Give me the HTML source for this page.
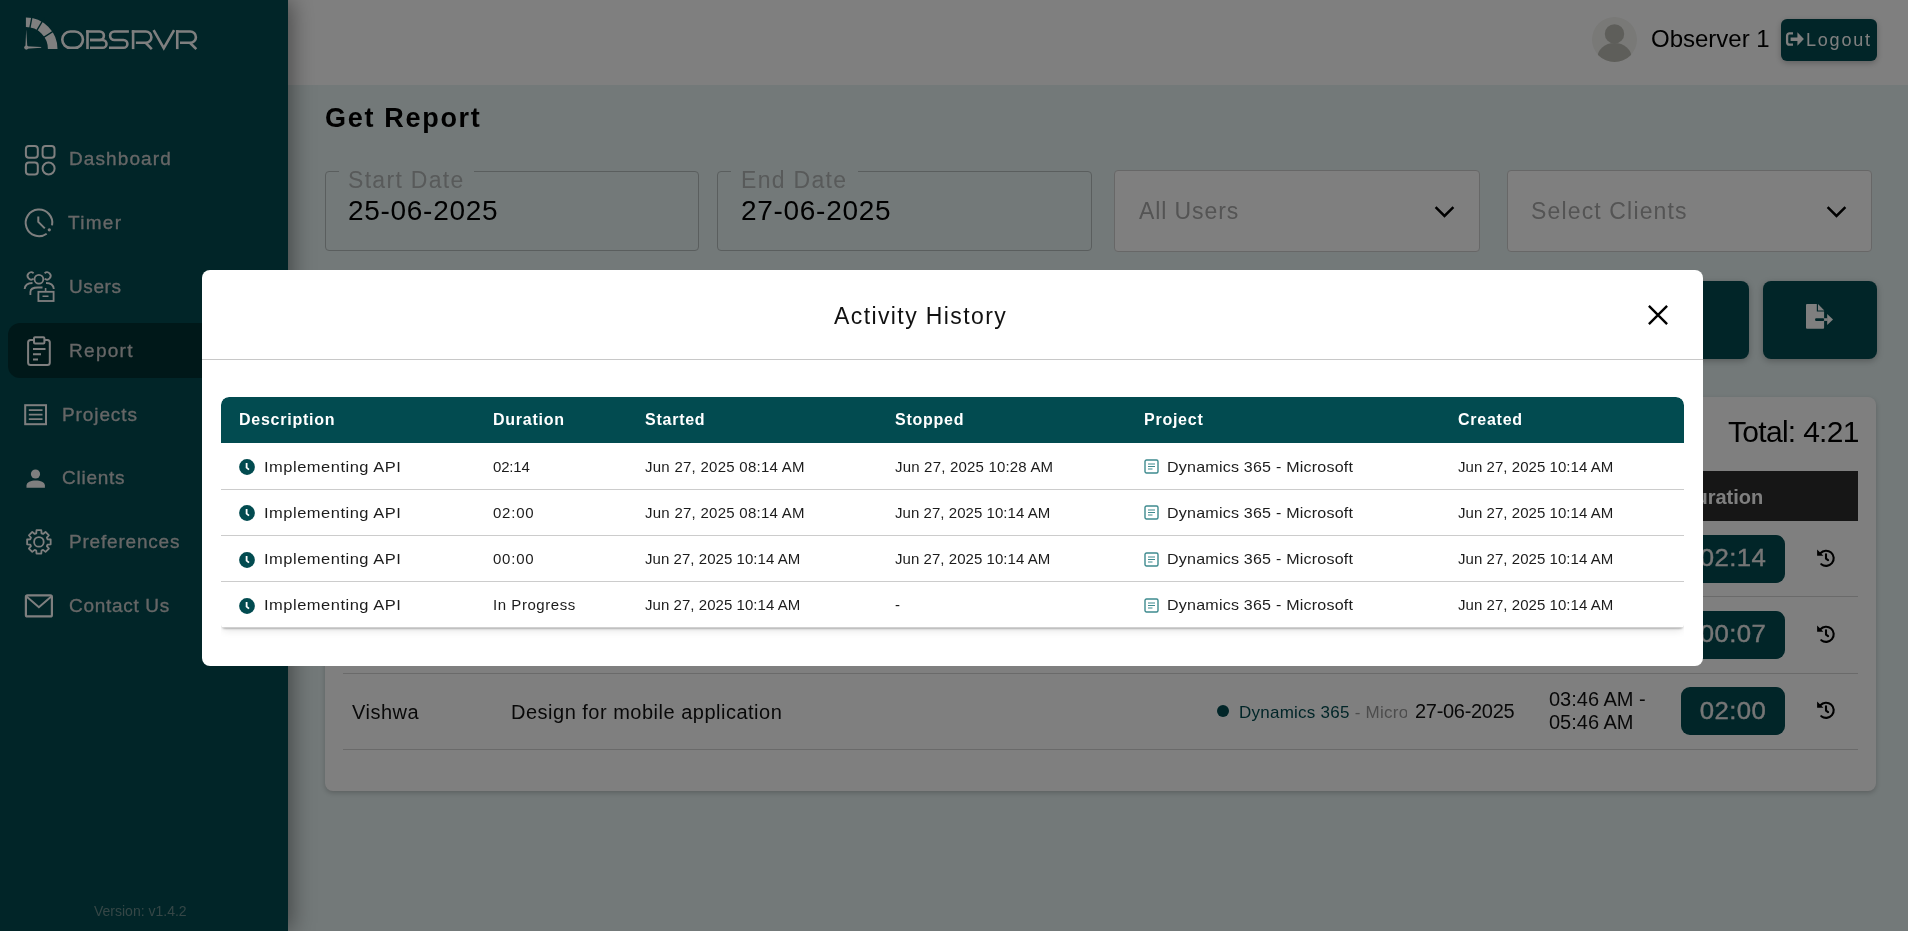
<!DOCTYPE html>
<html><head><meta charset="utf-8">
<style>
*{box-sizing:border-box;margin:0;padding:0}
html,body{width:1908px;height:931px;overflow:hidden;background:#e6f2f2;font-family:"Liberation Sans",sans-serif}
.a{position:absolute}
.t{position:absolute;white-space:nowrap;line-height:1;will-change:transform}
#sidebar{left:0;top:0;width:288px;height:931px;background:#024b50;box-shadow:3px 0 22px rgba(0,0,0,0.45);z-index:2}
#header{left:288px;top:0;width:1620px;height:85px;background:#fff;z-index:1}
.nav{color:#cdcdcd;font-size:19px;font-weight:400;-webkit-text-stroke:0.3px #cdcdcd}
.navi{position:absolute;fill:none;stroke:#fff;stroke-width:1.8}
#overlay{left:0;top:0;width:1908px;height:931px;background:rgba(0,0,0,0.5);z-index:10}
#modal{left:202px;top:270px;width:1501px;height:396px;background:#fff;border-radius:8px;z-index:11}
.th{color:#fff;font-weight:700;font-size:16px;letter-spacing:0.75px}
.td{color:#1c1c1c;font-size:15px}
</style></head><body>

<!-- SIDEBAR -->
<div id="sidebar" class="a">
  <svg class="a" style="left:0;top:0" width="288" height="660" viewBox="0 0 288 660">
    <g fill="none" stroke="#ffffff">
      <!-- gauge -->
      <path d="M25.9 22.2 A26.8 26.8 0 0 1 52.7 49" stroke-width="9.6"/>
    </g>
    <g stroke="#024b50" stroke-width="1.35">
      <line x1="25.9" y1="48.8" x2="32.65" y2="13.44"/>
      <line x1="25.9" y1="48.8" x2="44.33" y2="17.88"/>
      <line x1="25.9" y1="48.8" x2="56.19" y2="29.35"/>
    </g>
    <g fill="#ffffff">
      <path d="M26.2 29.5 L27.3 47 L25.4 47 Z"/>
      <path d="M26.4 46.3 L41.2 47.1 L41.2 47.8 L26.4 48.8 Z"/>
      <circle cx="26.3" cy="47.6" r="2.1"/>
    </g>
    <g fill="none" stroke="#ffffff" stroke-width="2.6">
      <rect x="62.3" y="31.5" width="20.6" height="16.3" rx="8"/>
      <path d="M87.5 30.2 V49.1"/>
      <path d="M86.2 31.5 H99.65 A4.25 4.25 0 0 1 99.65 40 H90"/>
      <path d="M90 40 H102.6 A3.9 3.9 0 0 1 102.6 47.8 H90"/>
      <path d="M128.9 31.5 H114.35 A4.25 4.25 0 0 0 114.35 40 H123.5 A3.9 3.9 0 0 1 123.5 47.8 H109"/>
      <path d="M133.1 30.2 V49.1"/>
      <path d="M131.8 31.5 H145.75 A5.65 5.65 0 0 1 145.75 42.8 H135.9"/>
      <path d="M145.7 42.8 L151.8 49.1"/>
      <path d="M153.6 30.2 L163.8 48.2 L174.1 30.2" stroke-linejoin="miter"/>
      <path d="M177.25 30.2 V49.1"/>
      <path d="M176 31.5 H190.25 A5.65 5.65 0 0 1 190.25 42.8 H180"/>
      <path d="M189.9 42.8 L196.3 49.1"/>
    </g>
  </svg>
  <div class="a" style="left:8px;top:323px;width:280px;height:55px;background:#013033;border-radius:12px"></div>
  <svg class="a" style="left:0;top:0" width="288" height="660" viewBox="0 0 288 660">
    <g fill="none" stroke="#ffffff" stroke-width="2">
      <!-- dashboard -->
      <rect x="25.9" y="145.9" width="11.9" height="11.9" rx="3"/>
      <rect x="42.6" y="145.9" width="11.9" height="11.9" rx="3"/>
      <rect x="25.9" y="162.6" width="11.9" height="11.9" rx="3"/>
      <circle cx="48.6" cy="168.5" r="6"/>
      <!-- timer -->
      <path d="M52.05 225.4 A13.3 13.3 0 1 0 46.7 233.7" stroke-width="2"/>
      <path d="M38.3 216.5 V221.9 L44.8 228.4" stroke-width="2"/>
      <!-- users -->
      <circle cx="38.9" cy="279.2" r="4.4" stroke-width="1.8"/>
      <path d="M33.6 278.6 A3.6 3.6 0 1 1 33.6 273.2" stroke-width="1.8"/>
      <path d="M44.6 273.2 A3.6 3.6 0 1 1 44.6 278.6" stroke-width="1.8"/>
      <path d="M24.6 289 C25 285 28 283 32.5 283" stroke-width="1.8"/>
      <path d="M46 283 C50.5 283 53.5 285 53.8 289" stroke-width="1.8"/>
      <path d="M30.4 295 V292 C30.4 289 34 287.5 38 287.5 H42.5" stroke-width="1.8"/>
      <rect x="38.4" y="291.8" width="15.2" height="9.2" stroke-width="1.8"/>
      <path d="M45.6 288 V291.8 M42.5 296.3 H48.5" stroke-width="1.6"/>
      <!-- report -->
      <rect x="28.1" y="340.1" width="21.7" height="24.9" rx="2.5" stroke="#ffffff" stroke-width="2"/>
      <rect x="34" y="337.2" width="10.4" height="6.3" rx="1" stroke="#ffffff" stroke-width="2" fill="#013033"/>
      <path d="M33 349.1 H45.5 M33 354.2 H41 M33 359.6 H38" stroke="#ffffff" stroke-width="2"/>
      <!-- projects -->
      <rect x="25.2" y="405.2" width="20.8" height="19" stroke-width="2"/>
      <path d="M28.8 410.1 H42.5 M28.8 414.7 H42.5 M28.8 419.2 H42.5" stroke-width="1.8"/>
      <!-- gear -->
      <circle cx="38.9" cy="541.9" r="4.8" stroke-width="1.8"/>
      <!-- mail -->
      <rect x="25.9" y="595.4" width="26" height="21" rx="1.5" stroke-width="2.2"/>
      <path d="M26.5 596.5 L38.9 607.2 L51.3 596.5" stroke-width="2"/>
    </g>
    <g fill="#ffffff">
      <circle cx="49.3" cy="229.8" r="1.6"/>
      <circle cx="35.5" cy="474" r="4.6"/>
      <path d="M26.5 487.8 V485.5 C26.5 482 31 480.4 35.7 480.4 C40.4 480.4 44.9 482 44.9 485.5 V487.8 Z"/>
    </g>
    <path id="gear" fill="none" stroke="#ffffff" stroke-width="1.8" stroke-linejoin="round" d="M36.24 533.30 L36.52 530.14 L41.28 530.14 L41.56 533.30 L43.10 533.94 L45.53 531.90 L48.90 535.27 L46.86 537.70 L47.50 539.24 L50.66 539.52 L50.66 544.28 L47.50 544.56 L46.86 546.10 L48.90 548.53 L45.53 551.90 L43.10 549.86 L41.56 550.50 L41.28 553.66 L36.52 553.66 L36.24 550.50 L34.70 549.86 L32.27 551.90 L28.90 548.53 L30.94 546.10 L30.30 544.56 L27.14 544.28 L27.14 539.52 L30.30 539.24 L30.94 537.70 L28.90 535.27 L32.27 531.90 L34.70 533.94 Z"/>
  </svg>
  <div class="t nav" style="left:69px;top:149px;letter-spacing:1.1px">Dashboard</div>
  <div class="t nav" style="left:68px;top:213px;letter-spacing:1.3px">Timer</div>
  <div class="t nav" style="left:69px;top:277px;letter-spacing:0.6px">Users</div>
  <div class="t nav" style="left:69px;top:341px;letter-spacing:1.3px">Report</div>
  <div class="t nav" style="left:62px;top:405px;letter-spacing:0.9px">Projects</div>
  <div class="t nav" style="left:62px;top:468px;letter-spacing:0.75px">Clients</div>
  <div class="t nav" style="left:69px;top:532px;letter-spacing:0.8px">Preferences</div>
  <div class="t nav" style="left:69px;top:596px;letter-spacing:0.7px">Contact Us</div>
  <div class="t" style="left:94px;top:904px;font-size:14px;color:#6a8c8c">Version: v1.4.2</div>
</div>

<!-- HEADER -->
<div id="header" class="a">
  <svg class="a" style="left:1304px;top:17px" width="45" height="45" viewBox="0 0 44 44">
    <defs><clipPath id="avc"><circle cx="22" cy="22" r="22"/></clipPath></defs>
    <circle cx="22" cy="22" r="22" fill="#f2f2ee"/>
    <g clip-path="url(#avc)" fill="#bcbcb4">
      <circle cx="22" cy="16.5" r="9.5"/>
      <ellipse cx="22" cy="40.5" rx="17" ry="15"/>
    </g>
  </svg>
  <div class="t" style="left:1363px;top:27px;font-size:24px;color:#000">Observer 1</div>
  <div class="a" style="left:1493px;top:19px;width:96px;height:42px;background:#024b50;border-radius:6px;box-shadow:0 2px 6px rgba(0,0,0,0.25)"></div>
  <svg class="a" style="left:1497px;top:30px" width="22" height="20" viewBox="0 0 22 20">
    <path d="M8 3.4 H4.6 C3.1 3.4 2.1 4.4 2.1 5.9 V12.2 C2.1 13.7 3.1 14.7 4.6 14.7 H8" fill="none" stroke="#fff" stroke-width="2.3"/>
    <path d="M5.6 7.4 H12.4 V2.3 L18.9 9.05 L12.4 15.8 V10.9 H5.6 Z" fill="#fff"/>
  </svg>
  <div class="t" style="left:1518px;top:31px;font-size:18px;color:#fff;letter-spacing:1.8px">Logout</div>
</div>

<!-- MAIN -->
<div class="t" style="left:325px;top:105px;font-size:27px;font-weight:700;color:#000;letter-spacing:1.7px">Get Report</div>

<div class="a" style="left:325px;top:171px;width:374px;height:80px;border:1px solid #b4bcbc;border-radius:4px"></div>
<div class="a" style="left:339px;top:169px;width:135px;height:4px;background:#e6f2f2"></div>
<div class="t" style="left:348px;top:168.5px;font-size:23px;color:#b0b4b4;letter-spacing:1.3px">Start Date</div>
<div class="t" style="left:348px;top:197px;font-size:28px;color:#000;letter-spacing:0.7px">25-06-2025</div>

<div class="a" style="left:717px;top:171px;width:375px;height:80px;border:1px solid #b4bcbc;border-radius:4px"></div>
<div class="a" style="left:731px;top:169px;width:127px;height:4px;background:#e6f2f2"></div>
<div class="t" style="left:741px;top:168.5px;font-size:23px;color:#b0b4b4;letter-spacing:1.3px">End Date</div>
<div class="t" style="left:741px;top:197px;font-size:28px;color:#000;letter-spacing:0.7px">27-06-2025</div>

<div class="a" style="left:1114px;top:170px;width:366px;height:82px;background:#fff;border:1px solid #cfcfcf;border-radius:4px"></div>
<div class="t" style="left:1139px;top:199.5px;font-size:23px;color:#a8a8a8;letter-spacing:0.9px">All Users</div>
<svg class="a" style="left:1434px;top:204px" width="21" height="15" viewBox="0 0 21 15"><path d="M1.6 3.2 L10.5 12 L19.4 3.2" fill="none" stroke="#000" stroke-width="2.5"/></svg>
<div class="a" style="left:1507px;top:170px;width:365px;height:82px;background:#fff;border:1px solid #cfcfcf;border-radius:4px"></div>
<div class="t" style="left:1531px;top:199.5px;font-size:23px;color:#a8a8a8;letter-spacing:1.15px">Select Clients</div>
<svg class="a" style="left:1826px;top:204px" width="21" height="15" viewBox="0 0 21 15"><path d="M1.6 3.2 L10.5 12 L19.4 3.2" fill="none" stroke="#000" stroke-width="2.5"/></svg>

<div class="a" style="left:1635px;top:281px;width:114px;height:78px;background:#024b50;border-radius:8px;box-shadow:0 2px 6px rgba(0,0,0,0.25)"></div>
<div class="a" style="left:1763px;top:281px;width:114px;height:78px;background:#024b50;border-radius:8px;box-shadow:0 2px 6px rgba(0,0,0,0.25)"></div>
<svg class="a" style="left:1804px;top:302px" width="30" height="28" viewBox="0 0 30 28">
  <path d="M3 1.9 H12.8 V9.4 H20.1 V25.8 Q20.1 26.8 19.1 26.8 H3 Q2 26.8 2 25.8 V2.9 Q2 1.9 3 1.9 Z" fill="#fff"/>
  <path d="M14 1.9 L20.3 8.5 H14 Z" fill="#fff"/>
  <rect x="11.1" y="16.2" width="9.0" height="2.7" rx="1" fill="#024b50"/>
  <rect x="20.1" y="16.2" width="3.4" height="2.7" fill="#fff"/>
  <path d="M23.2 12.1 L29 17.6 L23.2 23 Z" fill="#fff"/>
</svg>

<div class="a" style="left:325px;top:397px;width:1551px;height:394px;background:#fff;border-radius:8px;box-shadow:0 2px 5px rgba(0,0,0,0.2)"></div>
<div class="t" style="left:1728px;top:417px;font-size:30px;color:#000;letter-spacing:-0.7px">Total: 4:21</div>
<div class="a" style="left:343px;top:471px;width:1515px;height:50px;background:#2c2c2c"></div>
<div class="t" style="left:1681px;top:487px;font-size:20px;font-weight:700;color:#fff">Duration</div>
<div class="a" style="left:343px;top:596px;width:1515px;height:1px;background:#d4d4d4"></div>
<div class="a" style="left:343px;top:673px;width:1515px;height:1px;background:#d4d4d4"></div>
<div class="a" style="left:343px;top:749px;width:1515px;height:1px;background:#d4d4d4"></div>

<div class="t" style="left:352px;top:702px;font-size:20px;color:#111;letter-spacing:0.5px">Vishwa</div>
<div class="t" style="left:511px;top:702px;font-size:20px;color:#111;letter-spacing:0.5px">Design for mobile application</div>
<div class="a" style="left:1217px;top:705px;width:12px;height:12px;border-radius:50%;background:#024b50"></div>
<div class="a" style="left:1239px;top:701px;width:168px;height:24px;overflow:hidden"><span class="t" style="left:0;top:3px;font-size:17px;color:#024b50;letter-spacing:0.25px">Dynamics 365 <span style="color:#999">- Microsoft</span></span></div>
<div class="t" style="left:1415px;top:701px;font-size:20px;color:#111;letter-spacing:-0.3px">27-06-2025</div>
<div class="t" style="left:1549px;top:688px;font-size:20px;color:#111;line-height:23px">03:46 AM -<br>05:46 AM</div>

<div class="a" style="left:1681px;top:535px;width:104px;height:48px;background:#024b50;border-radius:9px"></div>
<div class="a" style="left:1681px;top:611px;width:104px;height:48px;background:#024b50;border-radius:9px"></div>
<div class="a" style="left:1681px;top:687px;width:104px;height:48px;background:#024b50;border-radius:9px"></div>
<div class="t" style="left:1681px;top:547px;width:104px;text-align:center;font-size:23px;color:#ececec;letter-spacing:0.4px;transform:scaleX(1.12);-webkit-text-stroke:0.3px #ececec">02:14</div>
<div class="t" style="left:1681px;top:623px;width:104px;text-align:center;font-size:23px;color:#ececec;letter-spacing:0.4px;transform:scaleX(1.12);-webkit-text-stroke:0.3px #ececec">00:07</div>
<div class="t" style="left:1681px;top:700px;width:104px;text-align:center;font-size:23px;color:#ececec;letter-spacing:0.4px;transform:scaleX(1.12);-webkit-text-stroke:0.3px #ececec">02:00</div>
<svg class="a" style="left:1815px;top:548px" width="22" height="22" viewBox="0 0 22 22"><path d="M5.4 5.3 A7.6 7.6 0 1 1 6.3 16.2" fill="none" stroke="#000" stroke-width="2.1" stroke-linecap="round"/><path d="M2.1 1.4 V7.7 H8.4 Z" fill="#000"/><path d="M11 6.3 V10.6 L13.1 12.2" fill="none" stroke="#000" stroke-width="2.1" stroke-linecap="round" stroke-linejoin="round"/></svg>
<svg class="a" style="left:1815px;top:624px" width="22" height="22" viewBox="0 0 22 22"><path d="M5.4 5.3 A7.6 7.6 0 1 1 6.3 16.2" fill="none" stroke="#000" stroke-width="2.1" stroke-linecap="round"/><path d="M2.1 1.4 V7.7 H8.4 Z" fill="#000"/><path d="M11 6.3 V10.6 L13.1 12.2" fill="none" stroke="#000" stroke-width="2.1" stroke-linecap="round" stroke-linejoin="round"/></svg>
<svg class="a" style="left:1815px;top:700px" width="22" height="22" viewBox="0 0 22 22"><path d="M5.4 5.3 A7.6 7.6 0 1 1 6.3 16.2" fill="none" stroke="#000" stroke-width="2.1" stroke-linecap="round"/><path d="M2.1 1.4 V7.7 H8.4 Z" fill="#000"/><path d="M11 6.3 V10.6 L13.1 12.2" fill="none" stroke="#000" stroke-width="2.1" stroke-linecap="round" stroke-linejoin="round"/></svg>

<!-- OVERLAY -->
<div id="overlay" class="a"></div>

<!-- MODAL -->
<div id="modal" class="a">
  <div class="t" style="left:632px;top:34.5px;font-size:23px;color:#111;letter-spacing:1.4px">Activity History</div>
  <svg class="a" style="left:1444px;top:33px" width="24" height="24" viewBox="0 0 24 24"><path d="M2.9 2.9 L21.1 21.1 M21.1 2.9 L2.9 21.1" stroke="#000" stroke-width="2.4"/></svg>
  <div class="a" style="left:0;top:89px;width:1501px;height:1px;background:#c8c8c8"></div>
  <div class="a" style="left:19px;top:127px;width:1463px;height:231px;background:#fff;border-radius:8px 8px 4px 4px;box-shadow:0 2px 2px -1px rgba(0,0,0,0.25),0 4px 8px -2px rgba(0,0,0,0.12);clip-path:inset(0 0 -14px 0 round 8px 8px 4px 4px);overflow:hidden">
    <div class="a" style="left:0;top:0;width:1463px;height:46px;background:#024b50"></div>
    <div class="a" style="left:0;top:230px;width:1463px;height:1px;background:#d0d0d0"></div>
    <div class="t th" style="left:18px;top:15px">Description</div>
    <div class="t th" style="left:272px;top:15px">Duration</div>
    <div class="t th" style="left:424px;top:15px">Started</div>
    <div class="t th" style="left:674px;top:15px">Stopped</div>
    <div class="t th" style="left:923px;top:15px">Project</div>
    <div class="t th" style="left:1237px;top:15px">Created</div>
    <svg class="a" style="left:18px;top:62.00px" width="16" height="16" viewBox="0 0 16 16"><circle cx="8" cy="8" r="7.9" fill="#024b50"/><path d="M7.6 4 V8.6 L10 10.6" fill="none" stroke="#fff" stroke-width="1.8"/></svg>
    <div class="t td" style="left:43px;top:61.50px;letter-spacing:0.45px;transform:scaleX(1.1);transform-origin:0 0">Implementing API</div>
    <div class="t td" style="left:272px;top:61.50px;letter-spacing:-0.2px">02:14</div>
    <div class="t td" style="left:424px;top:61.50px;letter-spacing:0.26px">Jun 27, 2025 08:14 AM</div>
    <div class="t td" style="left:674px;top:61.50px;letter-spacing:0.19px">Jun 27, 2025 10:28 AM</div>
    <svg class="a" style="left:923px;top:62.00px" width="15" height="15" viewBox="0 0 15 15"><rect x="1" y="1" width="13" height="13" rx="1.5" fill="none" stroke="#3e8a8e" stroke-width="1.4"/><path d="M4 5 H11 M4 7.5 H11 M4 10 H8.5" stroke="#3e8a8e" stroke-width="1.2"/></svg>
    <div class="t td" style="left:946px;top:61.50px;letter-spacing:0.2px;transform:scaleX(1.07);transform-origin:0 0">Dynamics 365 - Microsoft</div>
    <div class="t td" style="left:1237px;top:61.50px;letter-spacing:0.05px">Jun 27, 2025 10:14 AM</div>
    <div class="a" style="left:0;top:91.75px;width:1463px;height:1px;background:#cccccc"></div>
    <svg class="a" style="left:18px;top:108.25px" width="16" height="16" viewBox="0 0 16 16"><circle cx="8" cy="8" r="7.9" fill="#024b50"/><path d="M7.6 4 V8.6 L10 10.6" fill="none" stroke="#fff" stroke-width="1.8"/></svg>
    <div class="t td" style="left:43px;top:107.75px;letter-spacing:0.45px;transform:scaleX(1.1);transform-origin:0 0">Implementing API</div>
    <div class="t td" style="left:272px;top:107.75px;letter-spacing:0.76px">02:00</div>
    <div class="t td" style="left:424px;top:107.75px;letter-spacing:0.26px">Jun 27, 2025 08:14 AM</div>
    <div class="t td" style="left:674px;top:107.75px;letter-spacing:0.05px">Jun 27, 2025 10:14 AM</div>
    <svg class="a" style="left:923px;top:108.25px" width="15" height="15" viewBox="0 0 15 15"><rect x="1" y="1" width="13" height="13" rx="1.5" fill="none" stroke="#3e8a8e" stroke-width="1.4"/><path d="M4 5 H11 M4 7.5 H11 M4 10 H8.5" stroke="#3e8a8e" stroke-width="1.2"/></svg>
    <div class="t td" style="left:946px;top:107.75px;letter-spacing:0.2px;transform:scaleX(1.07);transform-origin:0 0">Dynamics 365 - Microsoft</div>
    <div class="t td" style="left:1237px;top:107.75px;letter-spacing:0.05px">Jun 27, 2025 10:14 AM</div>
    <div class="a" style="left:0;top:138.00px;width:1463px;height:1px;background:#cccccc"></div>
    <svg class="a" style="left:18px;top:154.50px" width="16" height="16" viewBox="0 0 16 16"><circle cx="8" cy="8" r="7.9" fill="#024b50"/><path d="M7.6 4 V8.6 L10 10.6" fill="none" stroke="#fff" stroke-width="1.8"/></svg>
    <div class="t td" style="left:43px;top:154.00px;letter-spacing:0.45px;transform:scaleX(1.1);transform-origin:0 0">Implementing API</div>
    <div class="t td" style="left:272px;top:154.00px;letter-spacing:0.76px">00:00</div>
    <div class="t td" style="left:424px;top:154.00px;letter-spacing:0.05px">Jun 27, 2025 10:14 AM</div>
    <div class="t td" style="left:674px;top:154.00px;letter-spacing:0.05px">Jun 27, 2025 10:14 AM</div>
    <svg class="a" style="left:923px;top:154.50px" width="15" height="15" viewBox="0 0 15 15"><rect x="1" y="1" width="13" height="13" rx="1.5" fill="none" stroke="#3e8a8e" stroke-width="1.4"/><path d="M4 5 H11 M4 7.5 H11 M4 10 H8.5" stroke="#3e8a8e" stroke-width="1.2"/></svg>
    <div class="t td" style="left:946px;top:154.00px;letter-spacing:0.2px;transform:scaleX(1.07);transform-origin:0 0">Dynamics 365 - Microsoft</div>
    <div class="t td" style="left:1237px;top:154.00px;letter-spacing:0.05px">Jun 27, 2025 10:14 AM</div>
    <div class="a" style="left:0;top:184.25px;width:1463px;height:1px;background:#cccccc"></div>
    <svg class="a" style="left:18px;top:200.75px" width="16" height="16" viewBox="0 0 16 16"><circle cx="8" cy="8" r="7.9" fill="#024b50"/><path d="M7.6 4 V8.6 L10 10.6" fill="none" stroke="#fff" stroke-width="1.8"/></svg>
    <div class="t td" style="left:43px;top:200.25px;letter-spacing:0.45px;transform:scaleX(1.1);transform-origin:0 0">Implementing API</div>
    <div class="t td" style="left:272px;top:200.25px;letter-spacing:0.55px">In Progress</div>
    <div class="t td" style="left:424px;top:200.25px;letter-spacing:0.05px">Jun 27, 2025 10:14 AM</div>
    <div class="t td" style="left:674px;top:200.25px;letter-spacing:0px">-</div>
    <svg class="a" style="left:923px;top:200.75px" width="15" height="15" viewBox="0 0 15 15"><rect x="1" y="1" width="13" height="13" rx="1.5" fill="none" stroke="#3e8a8e" stroke-width="1.4"/><path d="M4 5 H11 M4 7.5 H11 M4 10 H8.5" stroke="#3e8a8e" stroke-width="1.2"/></svg>
    <div class="t td" style="left:946px;top:200.25px;letter-spacing:0.2px;transform:scaleX(1.07);transform-origin:0 0">Dynamics 365 - Microsoft</div>
    <div class="t td" style="left:1237px;top:200.25px;letter-spacing:0.05px">Jun 27, 2025 10:14 AM</div>
  </div>
</div>

</body></html>
